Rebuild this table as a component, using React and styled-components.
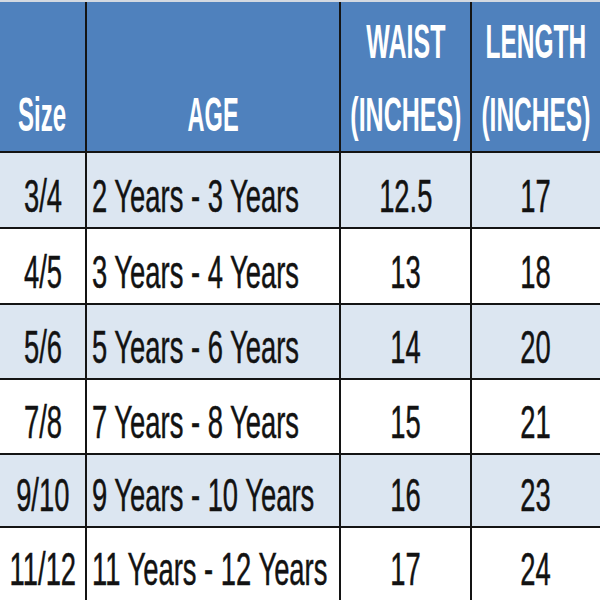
import React from "react";
import styled, { createGlobalStyle } from "styled-components";

const Global = createGlobalStyle`
  html, body { margin: 0; padding: 0; background: #ffffff; }
  body { width: 600px; height: 600px; overflow: hidden; }
`;

const Table = styled.div`
  width: 600px;
  height: 600px;
  display: grid;
  grid-template-columns: 85px 252px 129px 128px;
  grid-template-rows: 149px 74px 74px 73px 73px 71px 72px;
  gap: 2px;
  background: #141414;
  border-top: 2px solid #d3d9e1;
  box-sizing: border-box;
  overflow: hidden;
`;

const HeadCell = styled.div`
  background: #4f81bd;
  display: flex;
  align-items: flex-end;
  justify-content: center;
  overflow: hidden;
`;

const HeadText = styled.span`
  display: inline-block;
  font-family: "Liberation Sans", Arial, sans-serif;
  font-weight: 700;
  font-size: 49px;
  line-height: 73px;
  color: #ffffff;
  text-align: center;
  white-space: nowrap;
  transform: scaleX(${(p) => p.$sx});
  transform-origin: center bottom;
`;

const Cell = styled.div`
  background: ${(p) => (p.$tint ? "#dce6f1" : "#ffffff")};
  display: flex;
  align-items: flex-end;
  justify-content: ${(p) => (p.$left ? "flex-start" : "center")};
  padding: 0 0 8px ${(p) => (p.$left ? "5px" : "0")};
  overflow: hidden;
`;

const CellText = styled.span`
  display: inline-block;
  font-family: "Liberation Sans", Arial, sans-serif;
  font-size: 46px;
  line-height: 1;
  color: #121212;
  -webkit-text-stroke: 0.5px #121212;
  white-space: nowrap;
  transform: scaleX(0.595);
  transform-origin: ${(p) => (p.$left ? "left bottom" : "center bottom")};
`;

const rows = [
  ["3/4", "2 Years - 3 Years", "12.5", "17"],
  ["4/5", "3 Years - 4 Years", "13", "18"],
  ["5/6", "5 Years - 6 Years", "14", "20"],
  ["7/8", "7 Years - 8 Years", "15", "21"],
  ["9/10", "9 Years - 10 Years", "16", "23"],
  ["11/12", "11 Years - 12 Years", "17", "24"],
];

export default function App() {
  return (
    <>
      <Global />
      <Table>
        <HeadCell>
          <HeadText $sx={0.49}>Size</HeadText>
        </HeadCell>
        <HeadCell>
          <HeadText $sx={0.48}>AGE</HeadText>
        </HeadCell>
        <HeadCell>
          <HeadText $sx={0.51}>
            WAIST
            <br />
            (INCHES)
          </HeadText>
        </HeadCell>
        <HeadCell>
          <HeadText $sx={0.5}>
            LENGTH
            <br />
            (INCHES)
          </HeadText>
        </HeadCell>
        {rows.map((r, i) => {
          const tint = i % 2 === 0;
          return (
            <React.Fragment key={r[0]}>
              <Cell $tint={tint}>
                <CellText>{r[0]}</CellText>
              </Cell>
              <Cell $tint={tint} $left>
                <CellText $left>{r[1]}</CellText>
              </Cell>
              <Cell $tint={tint}>
                <CellText>{r[2]}</CellText>
              </Cell>
              <Cell $tint={tint}>
                <CellText>{r[3]}</CellText>
              </Cell>
            </React.Fragment>
          );
        })}
      </Table>
    </>
  );
}
